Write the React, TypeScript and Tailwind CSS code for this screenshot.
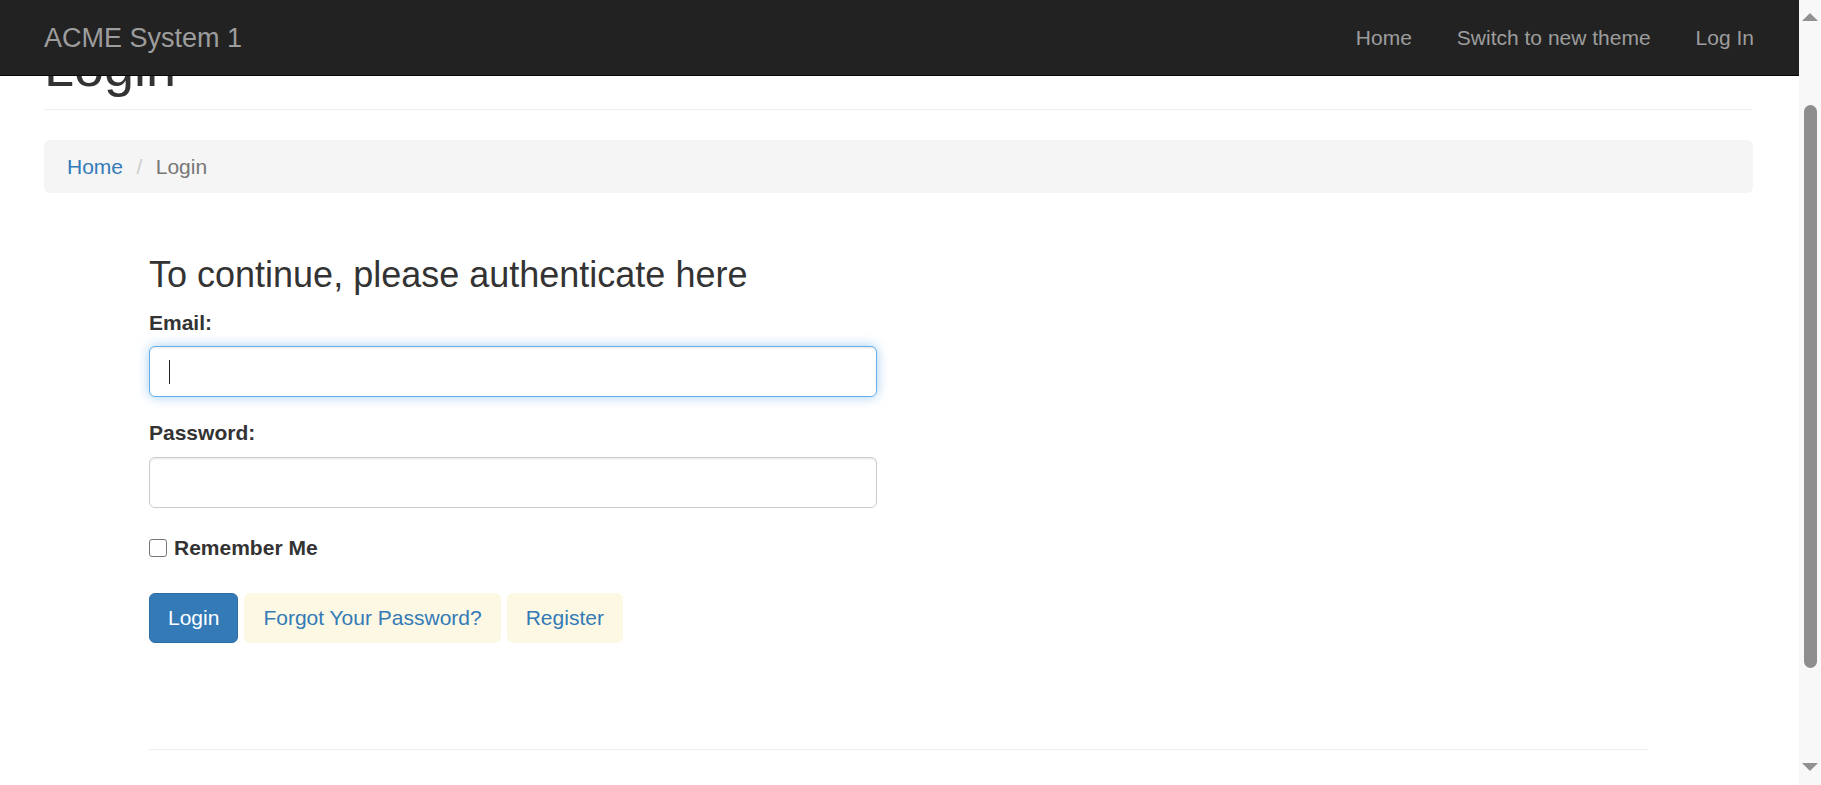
import React from "react";

const navLinks = ["Home", "Switch to new theme", "Log In"];

const Navbar = () => (
	<nav className="flex h-[76px] shrink-0 items-center justify-between border-b border-[#080808] bg-[#222] pl-[44px] pr-[45px]">
		<a href="#" className="text-[27px] leading-[30px] text-[#9d9d9d]">
			ACME System 1
		</a>
		<ul className="flex items-center gap-[45px]">
			{navLinks.map((item) => (
				<li key={item}>
					<a href="#" className="text-[21px] leading-[30px] text-[#9d9d9d]">
						{item}
					</a>
				</li>
			))}
		</ul>
	</nav>
);

const PageHeader = () => (
	<div className="flex h-[34px] flex-col justify-end overflow-hidden border-b border-[#eee] pb-[12px]">
		<h1 className="shrink-0 text-[54px] font-normal leading-[59px] text-[#333]">Login</h1>
	</div>
);

const Breadcrumb = () => (
	<ol className="mt-[30px] flex items-center rounded-[6px] bg-[#f5f5f5] px-[23px] py-[12px] text-[21px] leading-[29px]">
		<li>
			<a href="#" className="text-[#337ab7]">
				Home
			</a>
		</li>
		<li className="pl-[6px] text-[#777]">
			<span className="px-[7.5px] text-[#ccc]">/&nbsp;</span>
			Login
		</li>
	</ol>
);

const LoginForm = () => (
	<form className="flex w-[728px] flex-col" onSubmit={(e) => e.preventDefault()}>
		<h3 className="mt-[62px] mb-[13px] text-[36px] font-normal leading-[40px] text-[#333]">
			To continue, please authenticate here
		</h3>

		<label htmlFor="email" className="mb-[8px] text-[21px] font-bold leading-[30px]">
			Email:
		</label>
		<div className="flex h-[51px] items-center rounded-[6px] border border-[#66afe9] bg-white px-[19px] shadow-[inset_0_1.5px_1.5px_rgba(0,0,0,0.075),0_0_12px_rgba(102,175,233,0.6)]">
			<span className="h-[24px] w-px shrink-0 bg-[#222]" />
			<input id="email" type="email" className="min-w-0 flex-1 bg-transparent text-[21px] outline-none" />
		</div>

		<label htmlFor="password" className="mt-[21px] mb-[9px] text-[21px] font-bold leading-[30px]">
			Password:
		</label>
		<input
			id="password"
			type="password"
			className="h-[51px] rounded-[6px] border border-[#ccc] bg-white px-[18px] text-[21px] shadow-[inset_0_1.5px_1.5px_rgba(0,0,0,0.075)] outline-none"
		/>

		<label className="mt-[25px] flex h-[30px] items-center gap-[7px] text-[21px] font-bold">
			<input
				type="checkbox"
				className="h-[18px] w-[18px] appearance-none rounded-[3px] border border-[#767676] bg-white"
			/>
			Remember Me
		</label>

		<div className="mt-[30px] flex items-center gap-[6px] text-[21px]">
			<button
				type="submit"
				className="h-[50px] rounded-[6px] border border-[#2e6da4] bg-[#337ab7] px-[18px] text-white"
			>
				Login
			</button>
			<a
				href="#"
				className="flex h-[50px] items-center rounded-[6px] border border-transparent bg-[#fcf8e3] px-[18px] text-[#337ab7]"
			>
				Forgot Your Password?
			</a>
			<a
				href="#"
				className="flex h-[50px] items-center rounded-[6px] border border-transparent bg-[#fcf8e3] px-[18px] text-[#337ab7]"
			>
				Register
			</a>
		</div>
	</form>
);

const Scrollbar = () => (
	<div className="flex w-[22px] shrink-0 flex-col items-center bg-[#f8f8f8] pt-[13px] pb-[14px]">
		<svg width="16" height="8" viewBox="0 0 16 8">
			<path d="M8 0 L16 8 L0 8 Z" fill="#919191" />
		</svg>
		<div className="mt-[84px] h-[563px] w-[13px] rounded-full bg-[#8e8e8e]" />
		<div className="flex-1" />
		<svg width="16" height="8" viewBox="0 0 16 8">
			<path d="M0 0 L16 0 L8 8 Z" fill="#919191" />
		</svg>
	</div>
);

export default function App() {
	return (
		<div className="flex h-[785px] w-full overflow-hidden bg-white font-['Liberation_Sans',Arial,sans-serif] text-[#333]">
			<div className="flex min-w-0 flex-1 flex-col">
				<Navbar />
				<main className="flex flex-col pl-[44px] pr-[46px]">
					<PageHeader />
					<Breadcrumb />
					<section className="flex flex-col pl-[105px] pr-[104px]">
						<LoginForm />
						<hr className="mt-[106px] border-t border-[#eee]" />
					</section>
				</main>
			</div>
			<Scrollbar />
		</div>
	);
}
